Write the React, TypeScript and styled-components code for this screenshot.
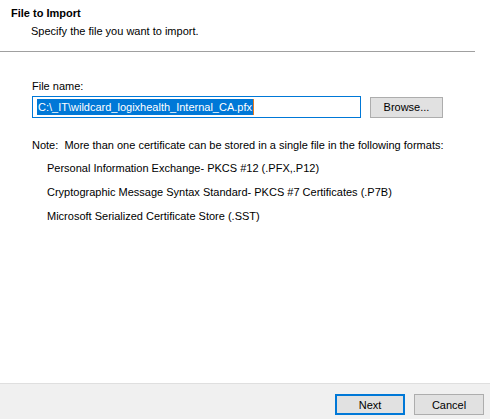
import React, { FunctionComponent } from "react";
import styled, { createGlobalStyle } from "styled-components";

const GlobalStyle = createGlobalStyle`
  html, body {
    margin: 0;
    padding: 0;
    background: #ffffff;
  }
  body {
    font-family: "Liberation Sans", Arial, sans-serif;
    font-size: 11px;
    color: #000000;
  }
`;

const Dialog = styled.div`
  width: 490px;
  height: 419px;
  display: flex;
  flex-direction: column;
  background: #ffffff;
`;

const Header = styled.div`
  padding: 6px 0 0 11px;
  height: 45px;
`;

const Title = styled.div`
  font-weight: bold;
  font-size: 11px;
  line-height: 14px;
`;

const Subtitle = styled.div`
  margin-top: 4px;
  padding-left: 20px;
  line-height: 14px;
`;

const Divider = styled.div`
  width: 475px;
  height: 1px;
  background: #a0a0a0;
  border-bottom: 1px solid #ffffff;
`;

const Content = styled.div`
  flex: 1;
  padding: 26px 0 0 32px;
`;

const Label = styled.div`
  line-height: 14px;
`;

const InputRow = styled.div`
  display: flex;
  align-items: center;
  gap: 9px;
  margin-top: 3px;
`;

const TextBox = styled.div`
  box-sizing: border-box;
  width: 329px;
  height: 22px;
  border: 1px solid #0078d7;
  padding: 2px 0 0 4px;
  display: flex;
  align-items: flex-start;
`;

const Selected = styled.span`
  background: #0078d7;
  color: #ffffff;
  line-height: 16px;
  padding: 0 1px;
`;

const Caret = styled.span`
  display: inline-block;
  width: 1px;
  height: 16px;
  background: #e87a1d;
`;

const Button = styled.button<{ $default?: boolean; $wide?: boolean }>`
  box-sizing: border-box;
  width: ${(p) => (p.$wide ? "73px" : "70px")};
  height: 21px;
  background: #e1e1e1;
  border: ${(p) => (p.$default ? "2px solid #0078d7" : "1px solid #adadad")};
  font-family: inherit;
  font-size: 11px;
  color: #000000;
  padding: 0;
  margin: 0;
`;

const Note = styled.div`
  margin-top: 20px;
  line-height: 14px;
`;

const FormatList = styled.div`
  padding-left: 15px;
  margin-top: 9px;
  display: flex;
  flex-direction: column;
  gap: 10px;
`;

const Format = styled.div`
  line-height: 14px;
`;

const Footer = styled.div`
  box-sizing: border-box;
  height: 36px;
  background: #f0f0f0;
  border-top: 1px solid #dfdfdf;
  display: flex;
  justify-content: flex-end;
  align-items: flex-start;
  gap: 9px;
  padding: 10px 6px 0 0;
`;

const App: FunctionComponent = () => {
  return (
    <Dialog>
      <GlobalStyle />
      <Header>
        <Title>File to Import</Title>
        <Subtitle>Specify the file you want to import.</Subtitle>
      </Header>
      <Divider />
      <Content>
        <Label>File name:</Label>
        <InputRow>
          <TextBox>
            <Selected>C:\_IT\wildcard_logixhealth_Internal_CA.pfx</Selected>
            <Caret />
          </TextBox>
          <Button $wide>Browse...</Button>
        </InputRow>
        <Note>
          Note:&nbsp; More than one certificate can be stored in a single file in the following formats:
        </Note>
        <FormatList>
          <Format>Personal Information Exchange- PKCS #12 (.PFX,.P12)</Format>
          <Format>Cryptographic Message Syntax Standard- PKCS #7 Certificates (.P7B)</Format>
          <Format>Microsoft Serialized Certificate Store (.SST)</Format>
        </FormatList>
      </Content>
      <Footer>
        <Button $default>Next</Button>
        <Button>Cancel</Button>
      </Footer>
    </Dialog>
  );
};

export default App;
